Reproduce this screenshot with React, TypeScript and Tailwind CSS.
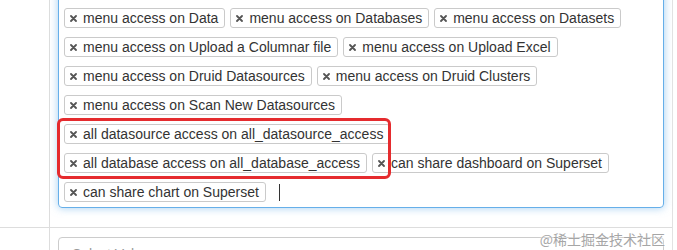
import React from "react";

const rowsTags = [
  "menu access on Data",
  "menu access on Databases",
  "menu access on Datasets",
  "menu access on Upload a Columnar file",
  "menu access on Upload Excel",
  "menu access on Druid Datasources",
  "menu access on Druid Clusters",
  "menu access on Scan New Datasources",
  "all datasource access on all_datasource_access",
  "all database access on all_database_access",
  "can share dashboard on Superset",
  "can share chart on Superset",
];

function Tag({ label }: { label: string }) {
  return (
    <div className="relative flex h-[20px] items-center rounded-[3px] border border-[#cacaca] bg-white pl-[18px] pr-[6px] text-[14px] leading-none text-[#333]">
      <svg
        className="absolute left-[5px] top-[6px]"
        width="7"
        height="7"
        viewBox="0 0 7 7"
      >
        <path d="M1 1 L6 6 M6 1 L1 6" stroke="#555" strokeWidth="1.8" strokeLinecap="round" />
      </svg>
      <span>{label}</span>
    </div>
  );
}

export default function App() {
  return (
    <div
      className="relative h-[250px] w-[677px] overflow-hidden bg-white"
      style={{ fontFamily: '"Liberation Sans", Arial, sans-serif' }}
    >
      <div className="-mt-[12px] w-[673px] border-r border-[#e2e2e2]">
        <div className="flex border-b border-[#dddddd]">
          <div className="w-[50px] shrink-0 border-r border-[#dddddd]" />
          <div className="flex-1 pb-[19px] pl-[8px] pr-[8px]">
            <div className="rounded-[4px] border border-[#66afe9] pb-[5px] pt-[19px] shadow-[0_0_8px_rgba(102,175,233,0.6)]">
              <div className="flex flex-wrap gap-x-[5px] gap-y-[9px] pl-[5px] pr-[24px]">
                {rowsTags.map((t) => (
                  <Tag key={t} label={t} />
                ))}
                <span className="ml-[8px] h-[17px] w-px self-center bg-[#333]" />
              </div>
            </div>
          </div>
        </div>
        <div className="flex">
          <div className="w-[50px] shrink-0 border-r border-[#dddddd]" />
          <div className="flex-1 pl-[8px] pr-[8px] pt-[9px]">
            <div className="flex h-[34px] items-center rounded-[4px] border border-[#cccccc] pl-[13px] text-[14px] text-[#999]">
              Select Value...
            </div>
          </div>
        </div>
      </div>

      <div className="pointer-events-none absolute left-[57px] top-[118px] h-[61px] w-[334px] rounded-[6px] border-[3px] border-[#e52b2e]" />

      <div
        className="pointer-events-none absolute right-[12px] top-[230px] text-[14px] leading-[18px] text-[#a6a6a6]"
        style={{
          fontFamily: '"Noto Sans CJK SC", "Noto Sans", sans-serif',
          textShadow: "0 0 2px #fff, 0 0 1px #fff",
        }}
      >
        @稀土掘金技术社区
      </div>
    </div>
  );
}
